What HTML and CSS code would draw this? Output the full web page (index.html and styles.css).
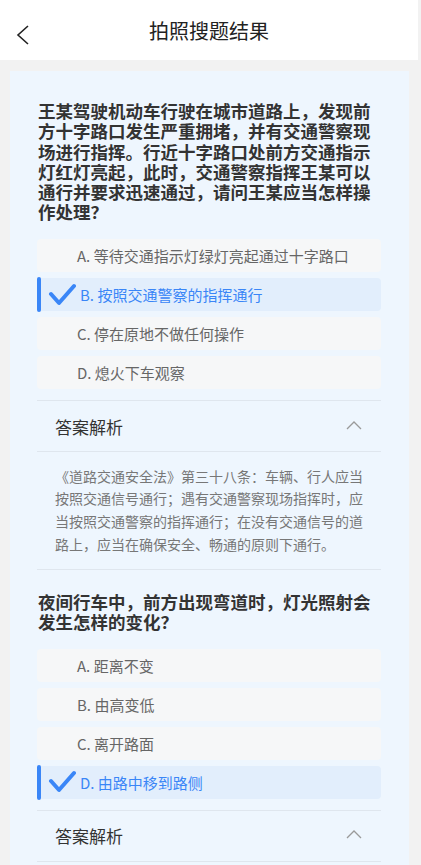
FILE: index.html
```html
<!DOCTYPE html>
<html lang="zh-CN">
<head>
    <meta charset="UTF-8">
    <meta name="viewport" content="width=device-width, initial-scale=1.0">
    <title>拍照搜题结果</title>
    <link rel="stylesheet" href="styles.css">
</head>
<body>
<div class="page">

    <div class="header">
        <span class="back">
            <svg width="14" height="22" viewBox="0 0 14 22"><polyline points="12,2 2,11 12,20" fill="none" stroke="#222" stroke-width="1.6"/></svg>
        </span>
        <h1>拍照搜题结果</h1>
    </div>

    <div class="card">

        <!-- 第一题 -->
        <div class="question">
            <p class="q-text">王某驾驶机动车行驶在城市道路上，发现前方十字路口发生严重拥堵，并有交通警察现场进行指挥。行近十字路口处前方交通指示灯红灯亮起，此时，交通警察指挥王某可以通行并要求迅速通过，请问王某应当怎样操作处理？</p>
            <div class="options">
                <div class="option">A. 等待交通指示灯绿灯亮起通过十字路口</div>
                <div class="option selected">
                    <span class="bar"></span>
                    <svg class="check" width="28" height="24" viewBox="0 0 28 24"><polyline points="3,11 11,20 26,3" fill="none" stroke="#3a86f7" stroke-width="4" stroke-linecap="round" stroke-linejoin="round"/></svg>
                    <span>B. 按照交通警察的指挥通行</span>
                </div>
                <div class="option">C. 停在原地不做任何操作</div>
                <div class="option">D. 熄火下车观察</div>
            </div>
            <div class="answer-head">
                <span>答案解析</span>
                <svg width="16" height="9" viewBox="0 0 16 9"><polyline points="1,8 8,1 15,8" fill="none" stroke="#9a9a9a" stroke-width="1.3"/></svg>
            </div>
            <p class="answer-body">《道路交通安全法》第三十八条：车辆、行人应当按照交通信号通行；遇有交通警察现场指挥时，应当按照交通警察的指挥通行；在没有交通信号的道路上，应当在确保安全、畅通的原则下通行。</p>
        </div>

        <!-- 第二题 -->
        <div class="question">
            <p class="q-text">夜间行车中，前方出现弯道时，灯光照射会发生怎样的变化？</p>
            <div class="options">
                <div class="option">A. 距离不变</div>
                <div class="option">B. 由高变低</div>
                <div class="option">C. 离开路面</div>
                <div class="option selected">
                    <span class="bar"></span>
                    <svg class="check" width="28" height="24" viewBox="0 0 28 24"><polyline points="3,11 11,20 26,3" fill="none" stroke="#3a86f7" stroke-width="4" stroke-linecap="round" stroke-linejoin="round"/></svg>
                    <span>D. 由路中移到路侧</span>
                </div>
            </div>
            <div class="answer-head">
                <span>答案解析</span>
                <svg width="16" height="9" viewBox="0 0 16 9"><polyline points="1,8 8,1 15,8" fill="none" stroke="#9a9a9a" stroke-width="1.3"/></svg>
            </div>
            <p class="answer-body">夜间行车中，前方出现弯道时，灯光照射会由路中移到路侧。</p>
        </div>

    </div>
</div>
</body>
</html>
```

FILE: styles.css
```css
body {
    margin: 0;
    background-color: #f2f2f2;
    font-family: "Noto Sans CJK SC", "Noto Sans", sans-serif;
    color: #333;
}

.page {
    width: 418px;
}

.header {
    height: 60px;
    background-color: #fff;
    display: flex;
    align-items: center;
    justify-content: center;
    position: relative;
}

.header h1 {
    margin: 0;
    font-size: 20px;
    font-weight: normal;
    color: #222;
}

.back {
    position: absolute;
    left: 16px;
    top: 24px;
    display: flex;
}

.card {
    margin: 11px 9px 0 10px;
    padding: 30px 28px 0 27px;
    background-color: #eef6fe;
}

.question + .question {
    margin-top: 22px;
}

.q-text {
    margin: 0;
    font-size: 17.5px;
    line-height: 20.3px;
    font-weight: bold;
    color: #333;
    padding: 0 9px 0 1px;
    word-break: break-all;
    line-break: anywhere;
}

.options {
    margin-top: 16.5px;
    display: flex;
    flex-direction: column;
    gap: 6px;
}

.option {
    height: 33px;
    display: flex;
    align-items: center;
    padding-left: 40px;
    background-color: #f6f7f8;
    border-radius: 4px;
    font-size: 15px;
    color: #666;
}

.option.selected {
    padding-left: 0;
    background-color: #e2eefc;
    color: #3a86f7;
}

.bar {
    width: 4px;
    height: 35px;
    border-radius: 2px;
    background-color: #3a86f7;
}

.check {
    margin-left: 7px;
    margin-right: 4px;
}

.answer-head {
    margin-top: 11px;
    height: 50px;
    border-top: 1px solid #dfe6ee;
    border-bottom: 1px solid #dfe6ee;
    display: flex;
    align-items: center;
    justify-content: space-between;
    padding: 0 19px 0 18px;
    font-size: 17px;
    color: #333;
}

.answer-head svg {
    margin-top: -2px;
}

.answer-body {
    margin: 0;
    padding: 12.5px 16px 13.5px 18px;
    border-bottom: 1px solid #dfe6ee;
    font-size: 14px;
    line-height: 22.6px;
    color: #777;
}
```
